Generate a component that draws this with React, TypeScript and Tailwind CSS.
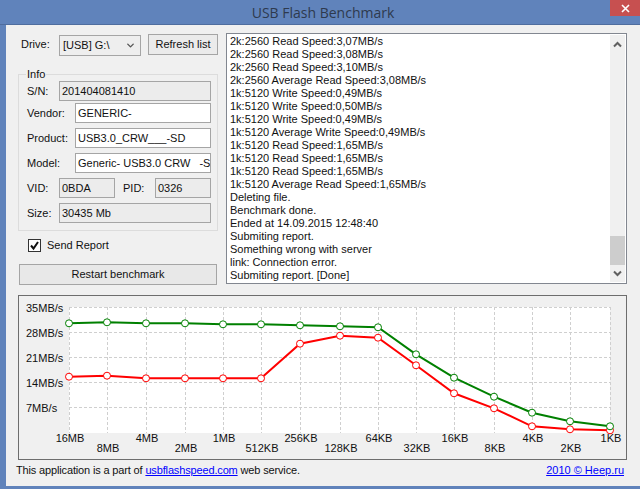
import { ChevronDown } from "lucide-react";

const LOG = [
  "2k:2560 Read Speed:3,07MB/s",
  "2k:2560 Read Speed:3,08MB/s",
  "2k:2560 Read Speed:3,10MB/s",
  "2k:2560 Average Read Speed:3,08MB/s",
  "1k:5120 Write Speed:0,49MB/s",
  "1k:5120 Write Speed:0,50MB/s",
  "1k:5120 Write Speed:0,49MB/s",
  "1k:5120 Average Write Speed:0,49MB/s",
  "1k:5120 Read Speed:1,65MB/s",
  "1k:5120 Read Speed:1,65MB/s",
  "1k:5120 Read Speed:1,65MB/s",
  "1k:5120 Average Read Speed:1,65MB/s",
  "Deleting file.",
  "Benchmark done.",
  "Ended at 14.09.2015 12:48:40",
  "Submiting report.",
  "Something wrong with server",
  "link: Connection error.",
  "Submiting report. [Done]",
];

const XS = [69, 107, 146, 185, 223, 261, 300, 340, 378, 416, 454, 494, 532, 570, 610];
const GREEN = [323.3, 322.3, 323.3, 323.3, 324.3, 324.3, 325.3, 326.3, 327.3, 354.3, 377.7, 396.7, 412.7, 421.3, 426.3];
const RED = [376.7, 375.7, 378.3, 378.3, 378.3, 378.3, 343.7, 335.7, 337.7, 365.3, 393.3, 408.3, 426.3, 429.3, 430.3];
const YLABELS = ["35MB/s", "28MB/s", "21MB/s", "14MB/s", "7MB/s"];
const XLABELS = ["16MB", "8MB", "4MB", "2MB", "1MB", "512KB", "256KB", "128KB", "64KB", "32KB", "16KB", "8KB", "4KB", "2KB", "1KB"];

// chart svg sits at x=19,y=296 of the page
const OX = 19;
const OY = 296;

function Series({ ys, color }: { ys: number[]; color: string }) {
  const pts = XS.map((x, i) => `${x - OX},${ys[i] - OY}`).join(" ");
  return (
    <g>
      <polyline points={pts} fill="none" stroke={color} strokeWidth="2" />
      {XS.map((x, i) => (
        <circle key={x} cx={x - OX} cy={ys[i] - OY} r="3.5" fill="white" stroke={color} strokeWidth="1" />
      ))}
    </g>
  );
}

function Chart() {
  return (
    <div className="w-[609px] h-[165px] border border-[#6d6d6d] ml-[12px] mt-[10px]">
      <svg width="607" height="163" className="block font-['Liberation_Sans',sans-serif]">
        <rect x={69 - OX} y={307 - OY} width={541} height={126} fill="white" />
        {[307.5, 332.5, 357.5, 382.5, 407.5].map((y) => (
          <line key={y} x1={69 - OX} x2={610 - OX} y1={y - OY} y2={y - OY} stroke="#cfcfcf" strokeDasharray="3 2" />
        ))}
        {XS.map((x) => (
          <line key={x} x1={x + 0.5 - OX} x2={x + 0.5 - OX} y1={307 - OY} y2={433 - OY} stroke="#cfcfcf" strokeDasharray="3 2" />
        ))}
        <Series ys={RED} color="#ff0000" />
        <Series ys={GREEN} color="#008000" />
        {YLABELS.map((t, i) => (
          <text key={t} x={26 - OX} y={312 + i * 25 - OY} fontSize="11" fill="#111">
            {t}
          </text>
        ))}
        {XLABELS.map((t, i) => (
          <text
            key={t}
            x={XS[i] + 1 - OX}
            y={(i % 2 === 0 ? 442 : 452) - OY}
            fontSize="11"
            fill="#111"
            textAnchor="middle"
          >
            {t}
          </text>
        ))}
      </svg>
    </div>
  );
}

function Row({ label, left, value, ro, top }: { label: string; left: string; value: string; ro?: boolean; top: string }) {
  return (
    <div className={`flex items-center ${top}`}>
      <span className={`${left} shrink-0`}>{label}</span>
      <div
        className={`flex-1 min-w-0 h-[20px] border border-[#a5a5a5] pl-[2px] leading-[18px] overflow-hidden whitespace-pre ${ro ? "bg-[#ececec]" : "bg-white"}`}
      >
        {value}
      </div>
    </div>
  );
}

export default function App() {
  return (
    <div className="relative w-[640px] h-[489px] flex flex-col bg-[#6083bb] text-[11px] text-[#111] font-['Liberation_Sans',sans-serif] overflow-hidden">
      <div className="h-[25px] shrink-0 flex items-center justify-center pl-[6px] text-[14px] text-[#2e3a4e] border-b border-[#4f6d9e] font-['Open_Sans',sans-serif]">
        USB Flash Benchmark
      </div>
      <button className="absolute top-0 right-0 w-[30px] h-[16px] bg-[#c75050] flex items-center justify-center">
        <svg width="9" height="9" viewBox="0 0 9 9">
          <path d="M1 1l7 7M8 1l-7 7" stroke="white" strokeWidth="1.6" />
        </svg>
      </button>
      <div className="ml-[6px] mb-[3px] flex-1 bg-[#f0f0f0] flex flex-col">
        <div className="flex pt-[8px]">
          <div className="w-[200px] ml-[12px] shrink-0">
            <div className="flex items-center">
              <span className="ml-[3px] w-[38px]">Drive:</span>
              <div className="w-[82px] h-[21px] mt-[2px] border border-[#a5a5a5] bg-[#eeeeee] flex items-center justify-between pl-[3px] pr-[4px]">
                <span>[USB] G:\</span>
                <ChevronDown className="w-[11px] h-[11px] text-[#555]" strokeWidth={3} />
              </div>
              <button className="ml-[7px] w-[70px] h-[21px] border border-[#a5a5a5] bg-[#ebebeb]">Refresh list</button>
            </div>
            <div className="relative mt-[18px] h-[157px] border border-[#dcdcdc] pl-[8px] pr-[6px]">
              <span className="absolute -top-[8px] left-[7px] bg-[#f0f0f0] px-[1px] leading-[14px]">Info</span>
              <Row label="S/N:" left="w-[32px]" value="201404081410" ro top="mt-[6px]" />
              <Row label="Vendor:" left="w-[48px]" value="GENERIC-" top="mt-[2px]" />
              <Row label="Product:" left="w-[48px]" value="USB3.0_CRW___-SD" top="mt-[5px]" />
              <Row label="Model:" left="w-[48px]" value="Generic- USB3.0 CRW   -SD" top="mt-[5px]" />
              <div className="flex items-center mt-[5px]">
                <span className="w-[32px] shrink-0">VID:</span>
                <div className="w-[56px] h-[20px] border border-[#a5a5a5] bg-[#ececec] pl-[2px] leading-[18px]">0BDA</div>
                <span className="ml-[8px] w-[32px] shrink-0">PID:</span>
                <div className="flex-1 h-[20px] border border-[#a5a5a5] bg-[#ececec] pl-[2px] leading-[18px]">0326</div>
              </div>
              <Row label="Size:" left="w-[32px]" value="30435 Mb" ro top="mt-[5px]" />
            </div>
            <div className="flex items-center mt-[6px] ml-[10px]">
              <div className="w-[13px] h-[13px] border border-[#333] bg-white flex items-center justify-center">
                <svg width="11" height="11" viewBox="0 0 11 11">
                  <path d="M2 5.5l2.5 3L9 2" fill="none" stroke="#111" strokeWidth="2" />
                </svg>
              </div>
              <span className="ml-[6px]">Send Report</span>
            </div>
            <button className="block w-[198px] h-[21px] ml-[1px] mt-[10px] border border-[#a5a5a5] bg-[#e8e8e8]">
              Restart benchmark
            </button>
          </div>
          <div className="ml-[8px] w-[401px] h-[251px] border border-[#828790] bg-white flex">
            <div className="flex-1 pl-[3px] pt-[1px] leading-[13px]">
              {LOG.map((l, i) => (
                <div key={i}>{l}</div>
              ))}
            </div>
            <div className="w-[15px] my-[1px] mr-[1px] bg-[#f0f0f0] flex flex-col items-center text-[#606060]">
              <svg width="9" height="7" viewBox="0 0 9 7" className="mt-[6px]">
                <path d="M1 5.5l3.5-3.5 3.5 3.5" fill="none" stroke="currentColor" strokeWidth="2" />
              </svg>
              <div className="w-full h-[29px] mt-auto bg-[#cdcdcd]" />
              <svg width="9" height="7" viewBox="0 0 9 7" className="mt-[5px] mb-[5px]">
                <path d="M1 1.5l3.5 3.5 3.5-3.5" fill="none" stroke="currentColor" strokeWidth="2" />
              </svg>
            </div>
          </div>
        </div>
        <Chart />
        <div className="flex justify-between pl-[10px] pr-[16px] mt-[2px]">
          <span className="tracking-[-0.15px]">
            This application is a part of <a className="text-[#0000ff] underline">usbflashspeed.com</a> web service.
          </span>
          <a className="text-[#0000ff] underline">2010 © Heep.ru</a>
        </div>
      </div>
    </div>
  );
}
